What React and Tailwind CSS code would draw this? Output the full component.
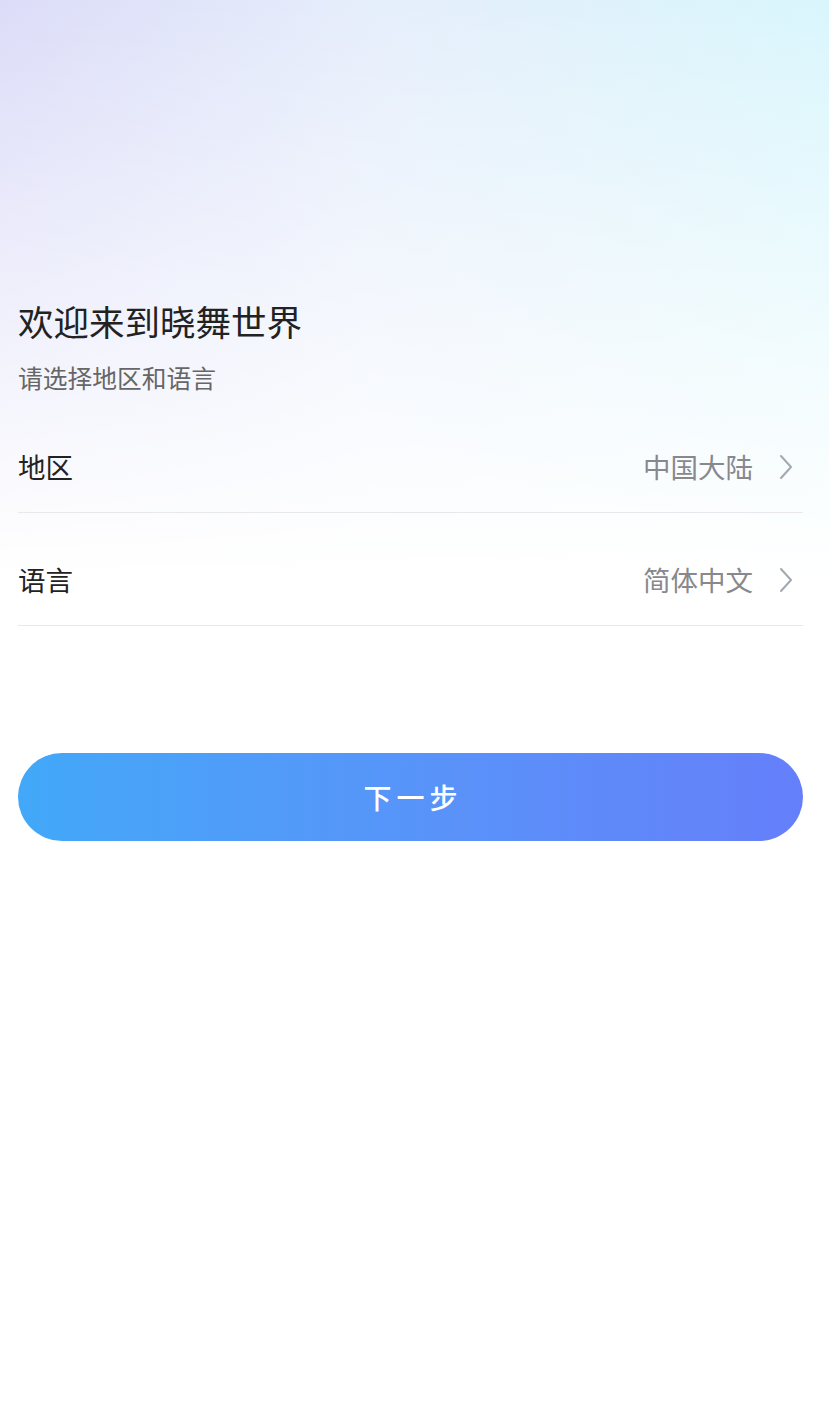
import React from 'react';

const ChevronRight = () => (
  <svg width="14" height="26" viewBox="0 0 14 26" fill="none" className="ml-[26px] mr-[10px]">
    <path d="M2 2l10 11L2 24" stroke="#a3a8b3" strokeWidth="2" strokeLinecap="round" strokeLinejoin="round" />
  </svg>
);

const SettingRow = ({ label, value, first }) => (
  <div className={`flex items-center justify-between h-[92px] border-b border-[#e8e8ea] ${first ? '' : 'mt-[21px]'}`}>
    <span className="text-[27.5px] text-[#222222] leading-none">{label}</span>
    <div className="flex items-center">
      <span className="text-[27.5px] text-[#88888d] leading-none">{value}</span>
      <ChevronRight />
    </div>
  </div>
);

const App = () => {
  return (
    <div
      className="min-h-[1406px] w-full bg-white bg-no-repeat bg-[length:100%_720px] bg-[image:linear-gradient(to_bottom,rgba(255,255,255,0)_0%,rgba(255,255,255,0.6)_45%,#ffffff_80%),linear-gradient(to_right,#dcdcf8_0%,#e6eefb_45%,#d9f6fc_100%)] pl-[18px] pr-[26px]"
      style={{ fontFamily: '"Noto Sans CJK SC", "Noto Sans", sans-serif' }}
    >
      <div className="pt-[300px]">
        <h1 className="text-[35.5px] leading-[42px] text-[#222222] font-normal">欢迎来到晓舞世界</h1>
        <p className="mt-[19px] text-[24.75px] leading-[32px] text-[#666666]">请选择地区和语言</p>
      </div>

      <div className="mt-[28px]">
        <SettingRow label="地区" value="中国大陆" first />
        <SettingRow label="语言" value="简体中文" />
      </div>

      <button className="mt-[127px] w-full h-[88px] rounded-full bg-linear-to-r from-[#42a8f8] to-[#657ffa] text-white text-[28px] font-medium tracking-[5px] pl-[5px] flex items-center justify-center">
        下一步
      </button>
    </div>
  );
};

export default App;
